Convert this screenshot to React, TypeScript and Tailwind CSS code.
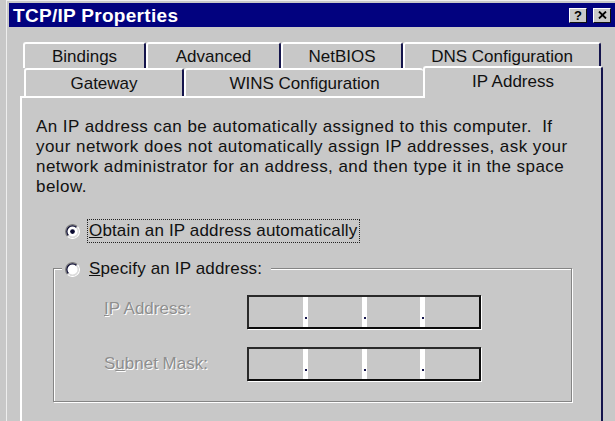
import React from "react";

const DARK = "border-r-[#14144c]";

const Radio = ({ checked }: { checked?: boolean }) => (
  <svg width="15" height="15" viewBox="0 0 12 12" className="shrink-0">
    <circle cx="6" cy="6" r="4.6" fill="#fff" />
    <path d="M2.1 9.9 A5.5 5.5 0 0 1 9.9 2.1" fill="none" stroke="#808080" strokeWidth="1" />
    <path d="M9.9 2.1 A5.5 5.5 0 0 1 2.1 9.9" fill="none" stroke="#ffffff" strokeWidth="1" />
    <path d="M2.8 9.2 A4.5 4.5 0 0 1 9.2 2.8" fill="none" stroke="#0a0a30" strokeWidth="1" />
    <path d="M9.2 2.8 A4.5 4.5 0 0 1 2.8 9.2" fill="none" stroke="#dcdcdc" strokeWidth="1" />
    {checked && <circle cx="6" cy="6" r="1.9" fill="#0a0a30" />}
  </svg>
);

const Tab = ({
  label,
  width,
  noRight,
}: {
  label: string;
  width: string;
  noRight?: boolean;
}) => (
  <div
    className={`${width} h-full flex items-center justify-center rounded-t-[3px] border-t-2 border-l-2 border-white ${
      noRight ? "" : `border-r-2 ${DARK}`
    } text-[17px] text-[#111] pt-[1px]`}
  >
    {label}
  </div>
);

const Dot = () => (
  <div className="w-[5px] bg-white flex flex-col justify-end items-center pb-[8px]">
    <div className="w-[2px] h-[2px] bg-[#14144c]" />
  </div>
);

const IpField = () => (
  <div className="w-[234px] h-[34px] flex border-2 border-t-[#2a2a2a] border-l-[#2a2a2a] border-b-[#0c0c0c] border-r-[#0c0c0c] shadow-[1px_1px_0_#ffffff] bg-[#c8c8c8]">
    <div className="w-[54px]" />
    <Dot />
    <div className="w-[54px]" />
    <Dot />
    <div className="w-[53px]" />
    <Dot />
    <div className="flex-1" />
  </div>
);

const App = () => {
  return (
    <div className="w-[615px] h-[421px] overflow-hidden bg-[#c8c8c8] font-['Liberation_Sans',Arial,sans-serif]">
      <div className="ml-[6px] h-full border-l border-t border-[#eeeeee] pl-[2px] pt-[2px]">
        {/* title bar */}
        <div className="h-[24px] bg-[#02027f] flex items-center justify-between pl-[4px] pr-[4px]">
          <span className="text-white font-bold text-[19px] tracking-[0.3px] leading-none">
            TCP/IP Properties
          </span>
          <div className="flex gap-[6px]">
            <div className="w-[18px] h-[15px] bg-[#c8c8c8] border border-t-white border-l-white border-b-[#111] border-r-[#111] flex items-center justify-center text-[13px] font-bold leading-none text-black">
              ?
            </div>
            <div className="w-[18px] h-[15px] bg-[#c8c8c8] border border-t-white border-l-white border-b-[#111] border-r-[#111] flex items-center justify-center">
              <svg width="9" height="8" viewBox="0 0 9 8">
                <path d="M1 0.5 L8 7.5 M8 0.5 L1 7.5" stroke="#000" strokeWidth="1.8" />
              </svg>
            </div>
          </div>
        </div>

        <div className="pl-[11px]">
          {/* back row of tabs */}
          <div className="flex ml-[3px] mt-[15px] h-[26px]">
            <Tab label="Bindings" width="w-[123px]" />
            <Tab label="Advanced" width="w-[135px]" />
            <Tab label="NetBIOS" width="w-[122px]" />
            <Tab label="DNS Configuration" width="w-[198px]" />
          </div>
          {/* front row of tabs */}
          <div className="flex ml-[4px] h-[28px] items-start">
            <Tab label="Gateway" width="w-[160px] h-[28px]" />
            <Tab label="WINS Configuration" width="w-[239px] h-[28px]" noRight />
            <div
              className={`relative z-10 -mt-[2px] w-[180px] h-[32px] bg-[#c8c8c8] rounded-t-[3px] border-t-2 border-l-2 border-white border-r-2 ${DARK} flex items-center justify-center pb-[3px] text-[17px] text-[#111]`}
            >
              IP Address
            </div>
          </div>

          {/* panel */}
          <div className={`w-[583px] h-[400px] border-t-2 border-l-2 border-white border-r-2 ${DARK}`}>
            <div className="pl-[14px] pt-[19px] text-[17px] tracking-[0.45px] leading-[20px] text-[#111] whitespace-pre">
              {"An IP address can be automatically assigned to this computer.  If"}
              <br />
              {"your network does not automatically assign IP addresses, ask your"}
              <br />
              {"network administrator for an address, and then type it in the space"}
              <br />
              {"below."}
            </div>

            <div className="ml-[43px] mt-[22px] h-[24px] flex items-center">
              <Radio checked />
              <div className="ml-[7px] h-[24px] flex items-center border border-dotted border-[#222] pl-[1px] pr-[2px] text-[17px] tracking-[0.15px] text-[#111]">
                <span>
                  <span className="underline">O</span>btain an IP address automatically
                </span>
              </div>
            </div>

            {/* group box */}
            <div className="ml-[31px] mt-[25px] w-[519px] h-[134px] border border-[#858585] shadow-[inset_1px_1px_0_#ffffff,1px_1px_0_#ffffff]">
              <div className="-mt-[12px] ml-[8px] w-fit h-[24px] pl-[3px] pr-[9px] bg-[#c8c8c8] flex items-center">
                <Radio />
                <span className="ml-[9px] text-[17px] tracking-[0.15px] text-[#111]">
                  <span className="underline">S</span>pecify an IP address:
                </span>
              </div>

              <div className="mt-[14px] pl-[50px] flex items-center">
                <span className="w-[143px] -mt-[6px] text-[17px] text-[#8e8e8e] [text-shadow:1px_1px_0_#ffffff]">
                  <span className="underline">I</span>P Address:
                </span>
                <IpField />
              </div>
              <div className="mt-[18px] pl-[50px] flex items-center">
                <span className="w-[143px] text-[17px] text-[#8e8e8e] [text-shadow:1px_1px_0_#ffffff]">
                  S<span className="underline">u</span>bnet Mask:
                </span>
                <IpField />
              </div>
            </div>
          </div>
        </div>
      </div>
    </div>
  );
};

export default App;
